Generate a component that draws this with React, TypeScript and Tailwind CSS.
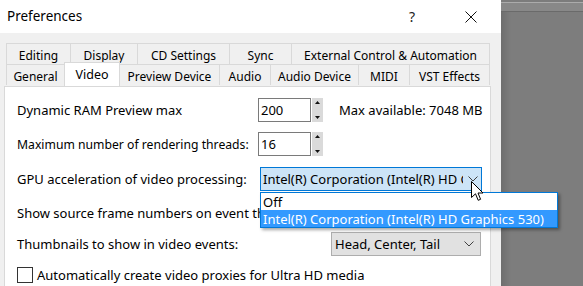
import React from 'react';

type Tab = { label: string; w: number; selected?: boolean; noLeft?: boolean; last?: boolean };

const backRow: Tab[] = [
  { label: 'Editing', w: 64 },
  { label: 'Display', w: 67 },
  { label: 'CD Settings', w: 92 },
  { label: 'Sync', w: 62 },
  { label: 'External Control & Automation', w: 199, last: true },
];

const frontRow: Tab[] = [
  { label: 'General', w: 58 },
  { label: 'Video', w: 56, selected: true },
  { label: 'Preview Device', w: 99, noLeft: true },
  { label: 'Audio', w: 51 },
  { label: 'Audio Device', w: 88 },
  { label: 'MIDI', w: 51 },
  { label: 'VST Effects', w: 81, last: true },
];

const TabButton: React.FC<{ tab: Tab }> = ({ tab }) => {
  if (tab.selected) {
    return (
      <div
        style={{ width: tab.w }}
        className="relative z-10 -mt-[2px] h-[24px] flex items-start justify-center pt-[2px] bg-white border-l border-r border-t border-[#d9d9d9] text-[12.5px] leading-[20px]"
      >
        {tab.label}
      </div>
    );
  }
  return (
    <div
      style={{ width: tab.w }}
      className={`h-[21px] flex items-center justify-center pt-[3px] border-t border-[#d9d9d9] whitespace-nowrap text-[12px] ${
        tab.noLeft ? '' : 'border-l'
      } ${tab.last ? 'border-r' : ''}`}
    >
      {tab.label}
    </div>
  );
};

const Chevron: React.FC = () => (
  <svg width="10" height="6" viewBox="0 0 10 6" className="shrink-0">
    <polyline points="0.5,0.5 5,5 9.5,0.5" fill="none" stroke="#404040" strokeWidth="1" />
  </svg>
);

const Spinner: React.FC = () => (
  <div className="ml-[1px] w-[11px] h-[24px] flex flex-col bg-[#dadada]">
    <div className="h-[12px] flex items-start justify-center pt-[3px]">
      <svg width="5" height="3" viewBox="0 0 5 3">
        <polygon points="2.5,0 5,3 0,3" fill="#111" />
      </svg>
    </div>
    <div className="h-[12px] flex items-end justify-center pb-[3px]">
      <svg width="5" height="3" viewBox="0 0 5 3">
        <polygon points="0,0 5,0 2.5,3" fill="#111" />
      </svg>
    </div>
  </div>
);

const NumberBox: React.FC<{ value: string }> = ({ value }) => (
  <div className="flex items-center">
    <div className="w-[53px] h-[24px] border border-[#7a7a7a] bg-white flex items-center pl-[2px] pt-[2px]">
      {value}
    </div>
    <Spinner />
  </div>
);

const App: React.FC = () => {
  return (
    <div className="relative w-[583px] h-[286px] overflow-hidden flex font-['Noto_Sans',sans-serif] text-[13px] text-black">
      {/* Dialog */}
      <div className="w-[501px] h-full flex flex-col">
        <div className="h-[35px] bg-white flex items-center pl-[7px]">
          <span className="text-[13.5px]">Preferences</span>
          <span className="ml-auto w-[10px] text-center text-[14px] text-[#222]">?</span>
          <div className="ml-[48px] mr-[24px] flex items-center">
            <svg width="12" height="12" viewBox="0 0 12 12">
              <path d="M0.5 0.5 L11.5 11.5 M11.5 0.5 L0.5 11.5" stroke="#111" strokeWidth="1" />
            </svg>
          </div>
        </div>

        <div className="flex-1 bg-[#f0f0f0] pt-[10px]">
          <div className="pl-[6px] flex">
            {backRow.map((t) => (
              <TabButton key={t.label} tab={t} />
            ))}
          </div>
          <div className="pl-[6px] flex">
            {frontRow.map((t) => (
              <TabButton key={t.label} tab={t} />
            ))}
          </div>

          {/* Panel */}
          <div className="ml-[4px] w-[487px] h-[200px] bg-white border-l border-r border-t border-[#d9d9d9] flex flex-col pl-[12px]">
            <div className="mt-[11px] h-[24px] flex items-center">
              <div className="w-[241px] pt-[2px] whitespace-nowrap">Dynamic RAM Preview max</div>
              <NumberBox value="200" />
              <div className="ml-[16px] pt-[2px]">Max available: 7048 MB</div>
            </div>

            <div className="mt-[10px] h-[24px] flex items-center">
              <div className="w-[241px] pt-[2px] whitespace-nowrap text-[12.2px]">Maximum number of rendering threads:</div>
              <NumberBox value="16" />
            </div>

            <div className="mt-[11px] h-[24px] flex items-center">
              <div className="w-[243px] pt-[2px] whitespace-nowrap">GPU acceleration of video processing:</div>
              <div className="w-[222px] h-[24px] border border-[#0078d7] bg-[#cce4f7] flex items-center pl-[2px] pr-[3px]">
                <div className="w-[200px] pt-[2px] overflow-hidden whitespace-nowrap">
                  Intel(R) Corporation (Intel(R) HD Graphics 530)
                </div>
                <div className="ml-auto">
                  <Chevron />
                </div>
              </div>
            </div>

            <div className="mt-[10px] h-[24px] flex items-center pt-[2px] whitespace-nowrap">
              Show source frame numbers on event thumbnails as:
            </div>

            <div className="mt-[7px] h-[24px] flex items-center">
              <div className="w-[314px] pt-[2px] whitespace-nowrap">Thumbnails to show in video events:</div>
              <div className="w-[150px] h-[24px] border border-[#adadad] bg-[#e1e1e1] flex items-center pl-[3px] pr-[6px]">
                <span className="pt-[2px]">Head, Center, Tail</span>
                <div className="ml-auto">
                  <Chevron />
                </div>
              </div>
            </div>

            <div className="mt-[11px] h-[16px] flex items-center">
              <div className="w-[16px] h-[16px] border border-[#333] bg-white" />
              <span className="ml-[4px] pt-[2px] whitespace-nowrap">Automatically create video proxies for Ultra HD media</span>
            </div>
          </div>
        </div>
      </div>

      {/* Background app behind dialog */}
      <div className="flex-1 flex flex-col">
        <div className="h-[2px] bg-[#7c7c7c]" />
        <div className="h-[1px] bg-[#ababab]" />
        <div className="h-[8px] bg-[#888888]" />
        <div className="h-[1px] bg-[#6a6a6a]" />
        <div className="flex-1 bg-[linear-gradient(to_right,#6e6e6e,#7d7d7d_10px)]" />
      </div>

      {/* Open dropdown list */}
      <div className="absolute left-[260px] top-[192px] w-[298px] bg-white border border-[#0078d7] shadow-[2px_2px_3px_rgba(0,0,0,0.35)] flex flex-col">
        <div className="h-[17px] pl-[2px] pt-[2px] flex items-center">Off</div>
        <div className="h-[17px] pl-[2px] pt-[2px] flex items-center bg-[#3399ff] text-white whitespace-nowrap">
          Intel(R) Corporation (Intel(R) HD Graphics 530)
        </div>
      </div>

      {/* Mouse pointer */}
      <svg className="absolute left-[471px] top-[181px]" width="13" height="21" viewBox="0 0 13 21">
        <path
          d="M0.5 0.5 L0.5 16.5 L4.5 12.8 L7.2 19.3 L9.6 18.3 L7 12 L12 12 Z"
          fill="#fff"
          stroke="#000"
          strokeWidth="1"
          strokeLinejoin="miter"
        />
      </svg>
    </div>
  );
};

export default App;
